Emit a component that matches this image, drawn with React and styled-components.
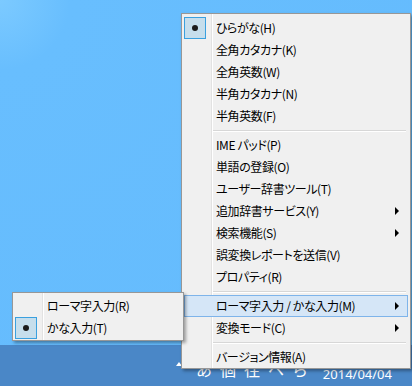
import styled, { createGlobalStyle } from 'styled-components'

const GlobalStyle = createGlobalStyle`
  body {
    margin: 0;
    overflow: hidden;
  }
`

const Screen = styled.div`
  position: relative;
  width: 412px;
  height: 386px;
  display: flex;
  flex-direction: column;
  overflow: hidden;
  font-family: "Noto Sans CJK JP", "Liberation Sans", sans-serif;
`

const Desktop = styled.div`
  flex: 1;
  background: radial-gradient(circle at 0 0, #7ccaff 0, #68befe 70px, #64bbfd 100%);
`

const Taskbar = styled.div`
  position: relative;
  height: 41px;
  background: #4a87c7;
  display: flex;
  align-items: center;
  padding-left: 176px;
  padding-right: 20px;
  color: #fff;
`

const ShowHidden = styled.span`
  width: 0;
  height: 0;
  border-left: 3px solid transparent;
  border-right: 3px solid transparent;
  border-bottom: 4px solid #fff;
  margin-right: 14px;
  margin-bottom: 3px;
`

const Tray = styled.div`
  display: flex;
  gap: 8px;
  font-size: 16px;
  line-height: 1;
  margin-top: 6px;
`

const TrayGlyph = styled.span`
  width: 16px;
  text-align: center;
`

const Clock = styled.div`
  margin-left: auto;
  display: flex;
  flex-direction: column;
  align-items: center;
  font-family: "Noto Sans", "Liberation Sans", sans-serif;
  font-size: 13px;
  line-height: 17px;
`

const Menu = styled.div`
  position: absolute;
  left: ${p => p.$left}px;
  top: ${p => p.$top}px;
  width: ${p => p.$width}px;
  box-sizing: border-box;
  padding: ${p => p.$pad};
  border: 1px solid #979797;
  background:
    linear-gradient(to right, transparent 29px, #e2e2e2 29px, #e2e2e2 30px, #ffffff 30px, #ffffff 31px, transparent 31px),
    #f0f0f0;
  box-shadow: 2px 2px 3px rgba(0, 0, 0, 0.35);
  font-size: 12px;
  letter-spacing: -0.4px;
  font-feature-settings: "palt";
  color: #000;
`

const Item = styled.div`
  position: relative;
  display: flex;
  align-items: center;
  height: 22px;
  box-sizing: border-box;
  background: ${p => (p.$active ? '#d5e6f7' : 'transparent')};
  box-shadow: ${p => (p.$active ? 'inset 0 0 0 1px #7eb4ea' : 'none')};
`

const Check = styled.span`
  width: 22px;
  height: 22px;
  box-sizing: border-box;
  flex: none;
  display: flex;
  align-items: center;
  justify-content: center;
  border: 1px solid ${p => (p.$on ? '#3aa0df' : 'transparent')};
  background: ${p => (p.$on ? '#c6deec' : 'transparent')};
  &::after {
    content: '';
    display: ${p => (p.$on ? 'block' : 'none')};
    width: 6px;
    height: 6px;
    border-radius: 50%;
    background: #1b1b1b;
  }
`

const Label = styled.span`
  flex: 1;
  margin-left: 10px;
  white-space: nowrap;
  line-height: 16px;
`

const Arrow = styled.span`
  width: 0;
  height: 0;
  margin-right: 9px;
  border-left: 4px solid #000;
  border-top: 4px solid transparent;
  border-bottom: 4px solid transparent;
`

const Separator = styled.div`
  height: 7px;
  margin-left: 29px;
  margin-right: 2px;
  display: flex;
  flex-direction: column;
  justify-content: center;
  &::before {
    content: '';
    height: 1px;
    background: #d7d7d7;
  }
  &::after {
    content: '';
    height: 1px;
    background: #ffffff;
  }
`

const mainItems = [
  { label: 'ひらがな(H)', checked: true },
  { label: '全角カタカナ(K)' },
  { label: '全角英数(W)' },
  { label: '半角カタカナ(N)' },
  { label: '半角英数(F)' },
  { sep: true },
  { label: 'IME パッド(P)' },
  { label: '単語の登録(O)' },
  { label: 'ユーザー辞書ツール(T)' },
  { label: '追加辞書サービス(Y)', sub: true },
  { label: '検索機能(S)', sub: true },
  { label: '誤変換レポートを送信(V)' },
  { label: 'プロパティ(R)' },
  { sep: true },
  { label: 'ローマ字入力 / かな入力(M)', sub: true, active: true },
  { label: '変換モード(C)', sub: true },
  { sep: true },
  { label: 'バージョン情報(A)' },
]

const subItems = [
  { label: 'ローマ字入力(R)' },
  { label: 'かな入力(T)', checked: true },
]

function MenuList({ items }) {
  return items.map((it, i) =>
    it.sep ? (
      <Separator key={i} />
    ) : (
      <Item key={i} $active={it.active}>
        <Check $on={it.checked} />
        <Label>{it.label}</Label>
        {it.sub && <Arrow />}
      </Item>
    )
  )
}

export default function App() {
  return (
    <Screen>
      <GlobalStyle />
      <Desktop />
      <Taskbar>
        <ShowHidden />
        <Tray>
          <TrayGlyph>あ</TrayGlyph>
          <TrayGlyph>個</TrayGlyph>
          <TrayGlyph>往</TrayGlyph>
          <TrayGlyph>ヘ</TrayGlyph>
          <TrayGlyph>ら</TrayGlyph>
        </Tray>
        <Clock>
          <span>10:24</span>
          <span>2014/04/04</span>
        </Clock>
      </Taskbar>

      <Menu $left={181} $top={13} $width={230} $pad="3px 2px 0 2px">
        <MenuList items={mainItems} />
      </Menu>
      <Menu $left={12} $top={292} $width={172} $pad="2px 2px 1px 2px">
        <MenuList items={subItems} />
      </Menu>
    </Screen>
  )
}
